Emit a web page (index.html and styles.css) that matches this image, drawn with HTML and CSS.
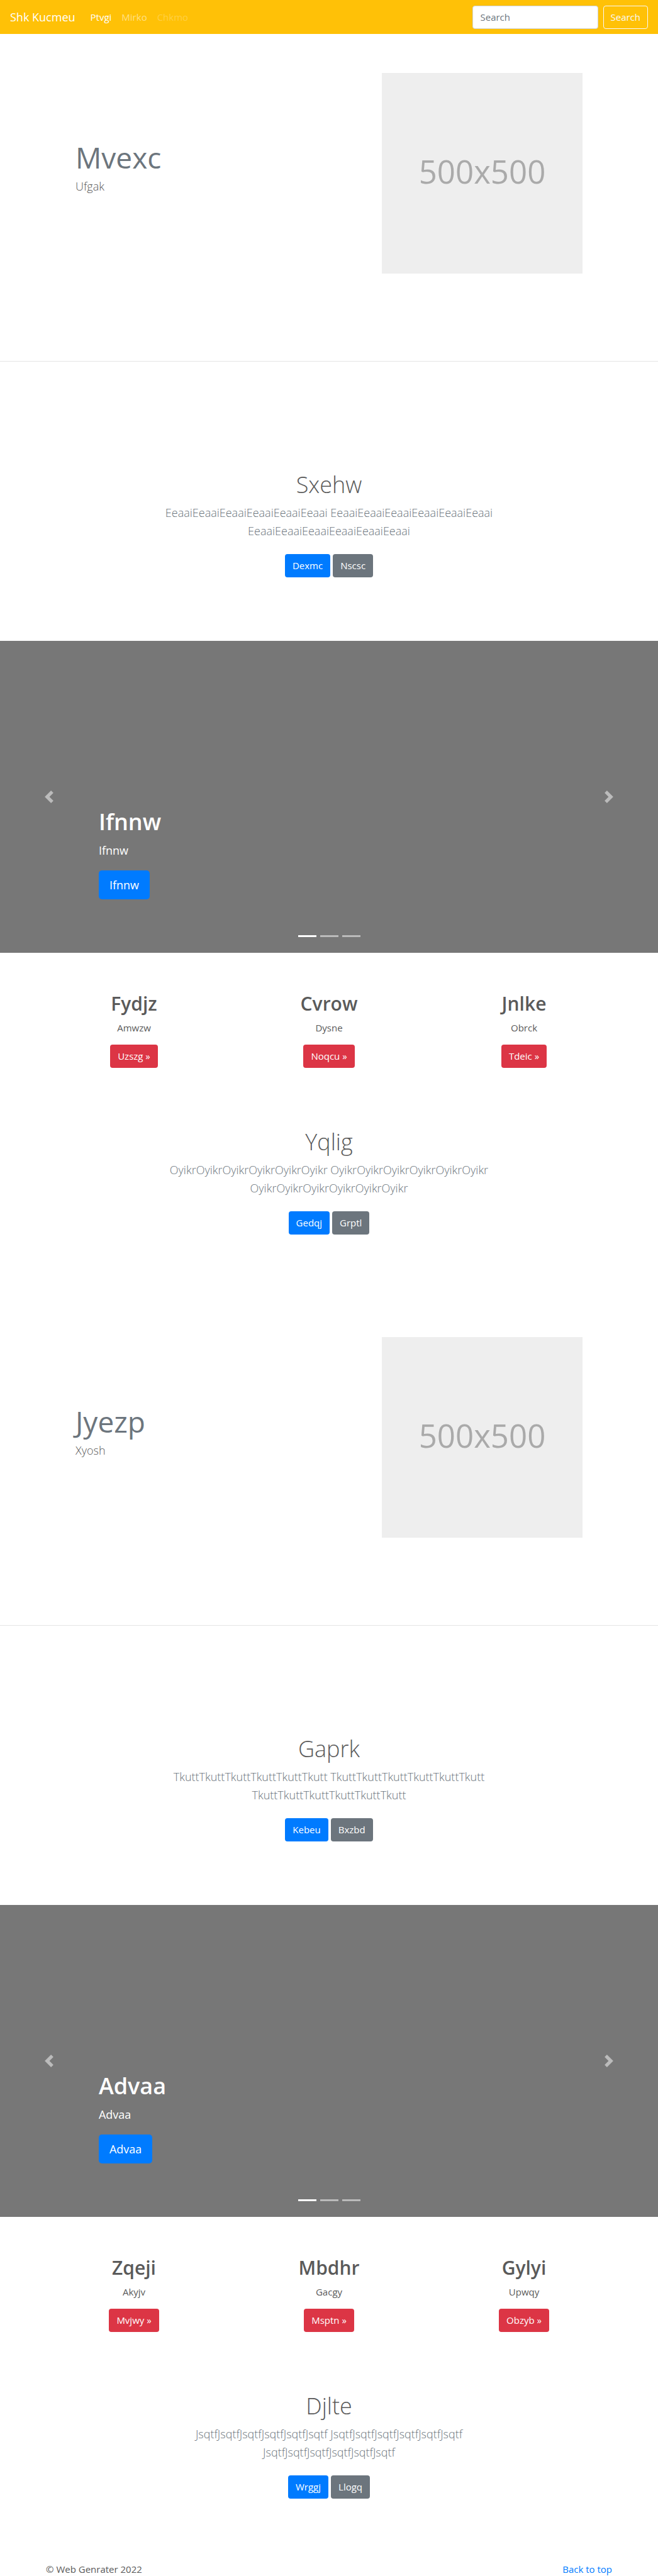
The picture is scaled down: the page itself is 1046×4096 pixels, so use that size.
FILE: index.html
```html
<!DOCTYPE html>
<html lang="en">
<head>
<meta charset="utf-8">
<meta name="viewport" content="width=device-width, initial-scale=1">
<title>Shk Kucmeu</title>
<link rel="stylesheet" href="styles.css">
</head>
<body id="top">
<header class="navbar">
  <a class="brand" href="#top">Shk Kucmeu</a>
  <nav class="nav">
    <a class="nav-link active" href="#">Ptvgi</a>
    <a class="nav-link" href="#">Mirko</a>
    <a class="nav-link disabled" href="#">Chkmo</a>
  </nav>
  <form class="search">
    <input class="search-input" type="search" placeholder="Search" aria-label="Search">
    <button class="btn btn-outline" type="submit">Search</button>
  </form>
</header>

<main>
  <section class="hero">
    <div class="hero-text">
      <h2 class="hero-title">Mvexc</h2>
      <p class="lead">Ufgak</p>
    </div>
    <div class="placeholder">500x500</div>
  </section>
  <hr class="divider">

  <section class="pitch">
    <h1 class="pitch-title">Sxehw</h1>
    <p class="lead muted">EeaaiEeaaiEeaaiEeaaiEeaaiEeaai EeaaiEeaaiEeaaiEeaaiEeaaiEeaai EeaaiEeaaiEeaaiEeaaiEeaaiEeaai</p>
    <div class="actions">
      <a class="btn btn-primary" href="#">Dexmc</a>
      <a class="btn btn-secondary" href="#">Nscsc</a>
    </div>
  </section>

  <section class="carousel">
    <div class="caption">
      <h1 class="caption-title">Ifnnw</h1>
      <p class="caption-text">Ifnnw</p>
      <a class="btn btn-primary btn-lg" href="#">Ifnnw</a>
    </div>
    <button class="control prev" type="button" aria-label="Previous"><svg class="chevron" viewBox="0 0 8 8"><path d="M5.25 0l-4 4 4 4 1.5-1.5L4.25 4l2.5-2.5L5.25 0z"/></svg></button>
    <button class="control next" type="button" aria-label="Next"><svg class="chevron" viewBox="0 0 8 8"><path d="M2.75 0l-1.5 1.5L3.75 4l-2.5 2.5L2.75 8l4-4-4-4z"/></svg></button>
    <ol class="indicators"><li class="current"></li><li></li><li></li></ol>
  </section>

  <section class="features">
    <article class="feature"><h2 class="feature-title">Fydjz</h2><p class="feature-text">Amwzw</p><a class="btn btn-danger" href="#">Uzszg »</a></article>
    <article class="feature"><h2 class="feature-title">Cvrow</h2><p class="feature-text">Dysne</p><a class="btn btn-danger" href="#">Noqcu »</a></article>
    <article class="feature"><h2 class="feature-title">Jnlke</h2><p class="feature-text">Obrck</p><a class="btn btn-danger" href="#">Tdeic »</a></article>
  </section>

  <section class="pitch">
    <h1 class="pitch-title">Yqlig</h1>
    <p class="lead muted">OyikrOyikrOyikrOyikrOyikrOyikr OyikrOyikrOyikrOyikrOyikrOyikr OyikrOyikrOyikrOyikrOyikrOyikr</p>
    <div class="actions">
      <a class="btn btn-primary" href="#">Gedqj</a>
      <a class="btn btn-secondary" href="#">Grptl</a>
    </div>
  </section>

  <section class="hero">
    <div class="hero-text">
      <h2 class="hero-title">Jyezp</h2>
      <p class="lead">Xyosh</p>
    </div>
    <div class="placeholder">500x500</div>
  </section>
  <hr class="divider">

  <section class="pitch">
    <h1 class="pitch-title">Gaprk</h1>
    <p class="lead muted">TkuttTkuttTkuttTkuttTkuttTkutt TkuttTkuttTkuttTkuttTkuttTkutt TkuttTkuttTkuttTkuttTkuttTkutt</p>
    <div class="actions">
      <a class="btn btn-primary" href="#">Kebeu</a>
      <a class="btn btn-secondary" href="#">Bxzbd</a>
    </div>
  </section>

  <section class="carousel">
    <div class="caption">
      <h1 class="caption-title">Advaa</h1>
      <p class="caption-text">Advaa</p>
      <a class="btn btn-primary btn-lg" href="#">Advaa</a>
    </div>
    <button class="control prev" type="button" aria-label="Previous"><svg class="chevron" viewBox="0 0 8 8"><path d="M5.25 0l-4 4 4 4 1.5-1.5L4.25 4l2.5-2.5L5.25 0z"/></svg></button>
    <button class="control next" type="button" aria-label="Next"><svg class="chevron" viewBox="0 0 8 8"><path d="M2.75 0l-1.5 1.5L3.75 4l-2.5 2.5L2.75 8l4-4-4-4z"/></svg></button>
    <ol class="indicators"><li class="current"></li><li></li><li></li></ol>
  </section>

  <section class="features">
    <article class="feature"><h2 class="feature-title">Zqeji</h2><p class="feature-text">Akyjv</p><a class="btn btn-danger" href="#">Mvjwy »</a></article>
    <article class="feature"><h2 class="feature-title">Mbdhr</h2><p class="feature-text">Gacgy</p><a class="btn btn-danger" href="#">Msptn »</a></article>
    <article class="feature"><h2 class="feature-title">Gylyi</h2><p class="feature-text">Upwqy</p><a class="btn btn-danger" href="#">Obzyb »</a></article>
  </section>

  <section class="pitch">
    <h1 class="pitch-title">Djlte</h1>
    <p class="lead muted">JsqtfJsqtfJsqtfJsqtfJsqtfJsqtf JsqtfJsqtfJsqtfJsqtfJsqtfJsqtf JsqtfJsqtfJsqtfJsqtfJsqtfJsqtf</p>
    <div class="actions">
      <a class="btn btn-primary" href="#">Wrggj</a>
      <a class="btn btn-secondary" href="#">Llogq</a>
    </div>
  </section>
</main>

<footer class="footer">
  <span>© Web Genrater 2022</span>
  <a class="footer-link" href="#top">Back to top</a>
</footer>
</body>
</html>
```
FILE: styles.css
```css
*, *::before, *::after { box-sizing: border-box; }

body {
  margin: 0;
  background: #fff;
  color: #5a5a5a;
  font: 400 15px/23px "Open Sans", "Noto Sans", sans-serif;
}

h1, h2, p, ol { margin: 0; padding: 0; }
a { text-decoration: none; }

/* Navigation bar */
.navbar {
  display: flex;
  align-items: center;
  height: 54px;
  padding: 0 16px;
  background: #ffc107;
}
.brand { margin-right: 16px; color: #fff; font-size: 18px; line-height: 28px; }
.nav { display: flex; flex: 1; }
.nav-link { padding: 0 8px; color: rgba(255, 255, 255, .5); }
.nav-link.active { color: #fff; }
.nav-link.disabled { color: rgba(255, 255, 255, .25); }
.search { display: flex; gap: 8px; }
.search-input {
  width: 200px;
  height: 37px;
  padding: 0 12px;
  border: 1px solid #ced4da;
  border-radius: 4px;
  background: #fff;
  color: #495057;
  font: inherit;
}
.search-input::placeholder { color: #6c757d; opacity: 1; }

/* Buttons */
.btn {
  display: inline-block;
  height: 37px;
  padding: 6px 11px;
  border: 1px solid transparent;
  border-radius: 4px;
  color: #fff;
  font: inherit;
  white-space: nowrap;
}
.btn-outline { border-color: #f8f9fa; background: transparent; color: #f8f9fa; }
.btn-primary { background: #007bff; }
.btn-secondary { background: #6c757d; }
.btn-danger { background: #dc3545; }
.btn-lg { height: 46px; padding: 8px 16px; border-radius: 5px; font-size: 18px; line-height: 28px; }

/* Hero with picture */
.hero {
  display: grid;
  grid-template-columns: 1fr 319px;
  padding: 62px 120px 139px;
}
.hero-text { padding-top: 104px; }
.hero-title { margin-bottom: 2px; color: #6c757d; font-size: 46px; line-height: 60px; font-weight: 400; }
.lead { font-size: 18px; line-height: 29px; font-weight: 300; }
.placeholder {
  display: flex;
  align-items: center;
  justify-content: center;
  aspect-ratio: 1;
  padding-bottom: 8px;
  background: #eee;
  color: #aaa;
  font-size: 51px;
  line-height: 60px;
}
.divider { height: 1px; margin: 0 0 82px; border: 0; background: #e5e5e5; }

/* Centred call to action */
.pitch {
  display: flex;
  flex-direction: column;
  align-items: center;
  padding: 91px 16px 101px;
  text-align: center;
}
.pitch-title { margin-bottom: 7px; font-size: 36px; line-height: 46px; font-weight: 300; }
.pitch .lead { max-width: 620px; }
.muted { color: #6c757d; }
.actions { display: flex; gap: 4px; margin-top: 22px; }

/* Carousel */
.carousel { position: relative; height: 496px; padding: 265px 15% 0; background: #777; color: #fff; }
.caption-title { margin-bottom: 8px; font-size: 36px; line-height: 46px; font-weight: 600; }
.caption-text { margin-bottom: 18px; font-size: 18px; line-height: 28px; }
.control {
  position: absolute;
  top: 0;
  bottom: 0;
  display: flex;
  align-items: center;
  justify-content: center;
  width: 15%;
  padding: 0;
  border: 0;
  background: none;
  opacity: .5;
}
.prev { left: 0; }
.next { right: 0; }
.chevron { width: 20px; height: 20px; fill: #fff; }
.indicators {
  position: absolute;
  right: 15%;
  bottom: 25px;
  left: 15%;
  display: flex;
  justify-content: center;
  gap: 6px;
  list-style: none;
}
.indicators li { width: 29px; height: 3px; background: #fff; opacity: .5; }
.indicators .current { opacity: 1; }

/* Three columns */
.features {
  display: grid;
  grid-template-columns: repeat(3, 1fr);
  padding: 62px 58px 4px;
  text-align: center;
}
.feature-title { margin-bottom: 8px; font-size: 30px; line-height: 38px; font-weight: 600; }
.feature-text { margin-bottom: 15px; }
.feature .btn { vertical-align: top; }

/* Footer */
.footer { display: flex; justify-content: space-between; padding: 0 73px; line-height: 22px; }
.footer-link { color: #007bff; }
```
